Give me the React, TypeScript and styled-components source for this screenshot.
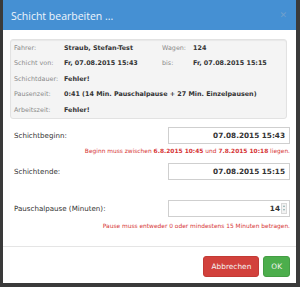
import React from "react";
import styled, { createGlobalStyle } from "styled-components";

const Global = createGlobalStyle`
  html, body {
    margin: 0;
    padding: 0;
    background: #3a3a3a;
    width: 300px;
    height: 287px;
    overflow: hidden;
  }
`;

const Page = styled.div`
  width: 300px;
  height: 287px;
  padding: 0 4px 4px 3px;
  box-sizing: border-box;
`;

const Dialog = styled.div`
  width: 293px;
  height: 283px;
  background: #fff;
  display: flex;
  flex-direction: column;
  font-family: "DejaVu Sans", Verdana, sans-serif;
`;

const Header = styled.div`
  height: 30px;
  background: #4590d3;
  display: flex;
  align-items: center;
  justify-content: space-between;
  padding: 0 9px 0 8px;
  flex-shrink: 0;
`;

const Title = styled.div`
  font-family: "Open Sans", sans-serif;
  font-size: 10.5px;
  color: #eef5fc;
  padding-top: 1px;
`;

const Close = styled.span`
  font-family: "DejaVu Sans", sans-serif;
  font-size: 9px;
  color: #6f9fcc;
`;

const Body = styled.div`
  padding: 9px 6px 0 7px;
  flex: 1;
`;

const InfoPanel = styled.div`
  background: #f4f4f4;
  border: 1px solid #e2e2e2;
  border-radius: 3px;
  box-shadow: inset 0 1px 1px rgba(0, 0, 0, 0.05);
  padding: 0 4px 0 3px;
  margin-right: 3px;
`;

const InfoRow = styled.div`
  display: flex;
  align-items: center;
  height: 15.5px;
  font-size: 6.4px;
`;

const Label = styled.span<{ $w?: number }>`
  color: #8a8a8a;
  width: ${(p) => p.$w ?? 50}px;
  flex-shrink: 0;
`;

const Value = styled.span<{ $w?: number }>`
  color: #333;
  font-weight: bold;
  width: ${(p) => (p.$w ? `${p.$w}px` : "auto")};
  flex-shrink: 0;
  white-space: nowrap;
`;

const Form = styled.div`
  margin-top: 8px;
  display: flex;
  flex-direction: column;
`;

const FieldRow = styled.div<{ $mt?: number }>`
  display: flex;
  align-items: center;
  justify-content: space-between;
  margin-top: ${(p) => p.$mt ?? 0}px;
  padding-left: 4px;
`;

const FieldLabel = styled.span`
  font-size: 7.1px;
  color: #333;
`;

const InputBox = styled.div`
  width: 122px;
  height: 17px;
  box-sizing: border-box;
  border: 1px solid #cfcfcf;
  background: #fff;
  display: flex;
  align-items: center;
  justify-content: flex-end;
  padding-right: 4px;
  font-size: 7.3px;
  font-weight: bold;
  color: #333;
`;

const Spinner = styled.span`
  display: flex;
  flex-direction: column;
  margin-left: 1px;
  margin-right: -2px;
  height: 11px;
  width: 6px;
  border: 1px solid #d8d8d8;
  box-sizing: border-box;
  background: #f2f2f2;
  align-items: center;
  justify-content: space-around;
`;

const Arrow = styled.span<{ $up?: boolean }>`
  width: 0;
  height: 0;
  border-left: 1.5px solid transparent;
  border-right: 1.5px solid transparent;
  ${(p) =>
    p.$up
      ? "border-bottom: 2px solid #8aa;"
      : "border-top: 2px solid #8aa;"}
`;

const ErrorLine = styled.div<{ $mt?: number }>`
  font-size: 5.9px;
  color: #d63434;
  text-align: right;
  margin-top: ${(p) => p.$mt ?? 4}px;
  white-space: nowrap;

  b {
    font-weight: bold;
  }
`;

const Footer = styled.div`
  border-top: 1px solid #e5e5e5;
  height: 36px;
  display: flex;
  align-items: center;
  justify-content: flex-end;
  gap: 4px;
  padding-right: 6px;
  flex-shrink: 0;
`;

const Button = styled.button<{ $color: string; $border: string }>`
  height: 21px;
  padding: 0 7px;
  border: 1px solid ${(p) => p.$border};
  border-radius: 3px;
  background: ${(p) => p.$color};
  color: #f4f4f4;
  font-family: "DejaVu Sans", Verdana, sans-serif;
  font-size: 7.4px;
  margin-top: 2px;
`;

export default function App() {
  return (
    <Page>
      <Global />
      <Dialog>
        <Header>
          <Title>Schicht bearbeiten ...</Title>
          <Close>✕</Close>
        </Header>
        <Body>
          <InfoPanel>
            <InfoRow>
              <Label>Fahrer:</Label>
              <Value $w={98}>Straub, Stefan-Test</Value>
              <Label $w={31}>Wagen:</Label>
              <Value>124</Value>
            </InfoRow>
            <InfoRow>
              <Label>Schicht von:</Label>
              <Value $w={98}>Fr, 07.08.2015 15:43</Value>
              <Label $w={31}>bis:</Label>
              <Value>Fr, 07.08.2015 15:15</Value>
            </InfoRow>
            <InfoRow>
              <Label>Schichtdauer:</Label>
              <Value>Fehler!</Value>
            </InfoRow>
            <InfoRow>
              <Label>Pausenzeit:</Label>
              <Value>0:41 (14 Min. Pauschalpause + 27 Min. Einzelpausen)</Value>
            </InfoRow>
            <InfoRow>
              <Label>Arbeitszeit:</Label>
              <Value>Fehler!</Value>
            </InfoRow>
          </InfoPanel>
          <Form>
            <FieldRow>
              <FieldLabel>Schichtbeginn:</FieldLabel>
              <InputBox>07.08.2015 15:43</InputBox>
            </FieldRow>
            <ErrorLine>
              Beginn muss zwischen <b>6.8.2015 10:45</b> und <b>7.8.2015 10:18</b> liegen.
            </ErrorLine>
            <FieldRow $mt={9}>
              <FieldLabel>Schichtende:</FieldLabel>
              <InputBox>07.08.2015 15:15</InputBox>
            </FieldRow>
            <FieldRow $mt={20}>
              <FieldLabel>Pauschalpause (Minuten):</FieldLabel>
              <InputBox>
                14
                <Spinner>
                  <Arrow $up />
                  <Arrow />
                </Spinner>
              </InputBox>
            </FieldRow>
            <ErrorLine $mt={6}>
              Pause muss entweder 0 oder mindestens 15 Minuten betragen.
            </ErrorLine>
          </Form>
        </Body>
        <Footer>
          <Button $color="#d2413c" $border="#c23a35">Abbrechen</Button>
          <Button $color="#4cae4c" $border="#449d44">OK</Button>
        </Footer>
      </Dialog>
    </Page>
  );
}
